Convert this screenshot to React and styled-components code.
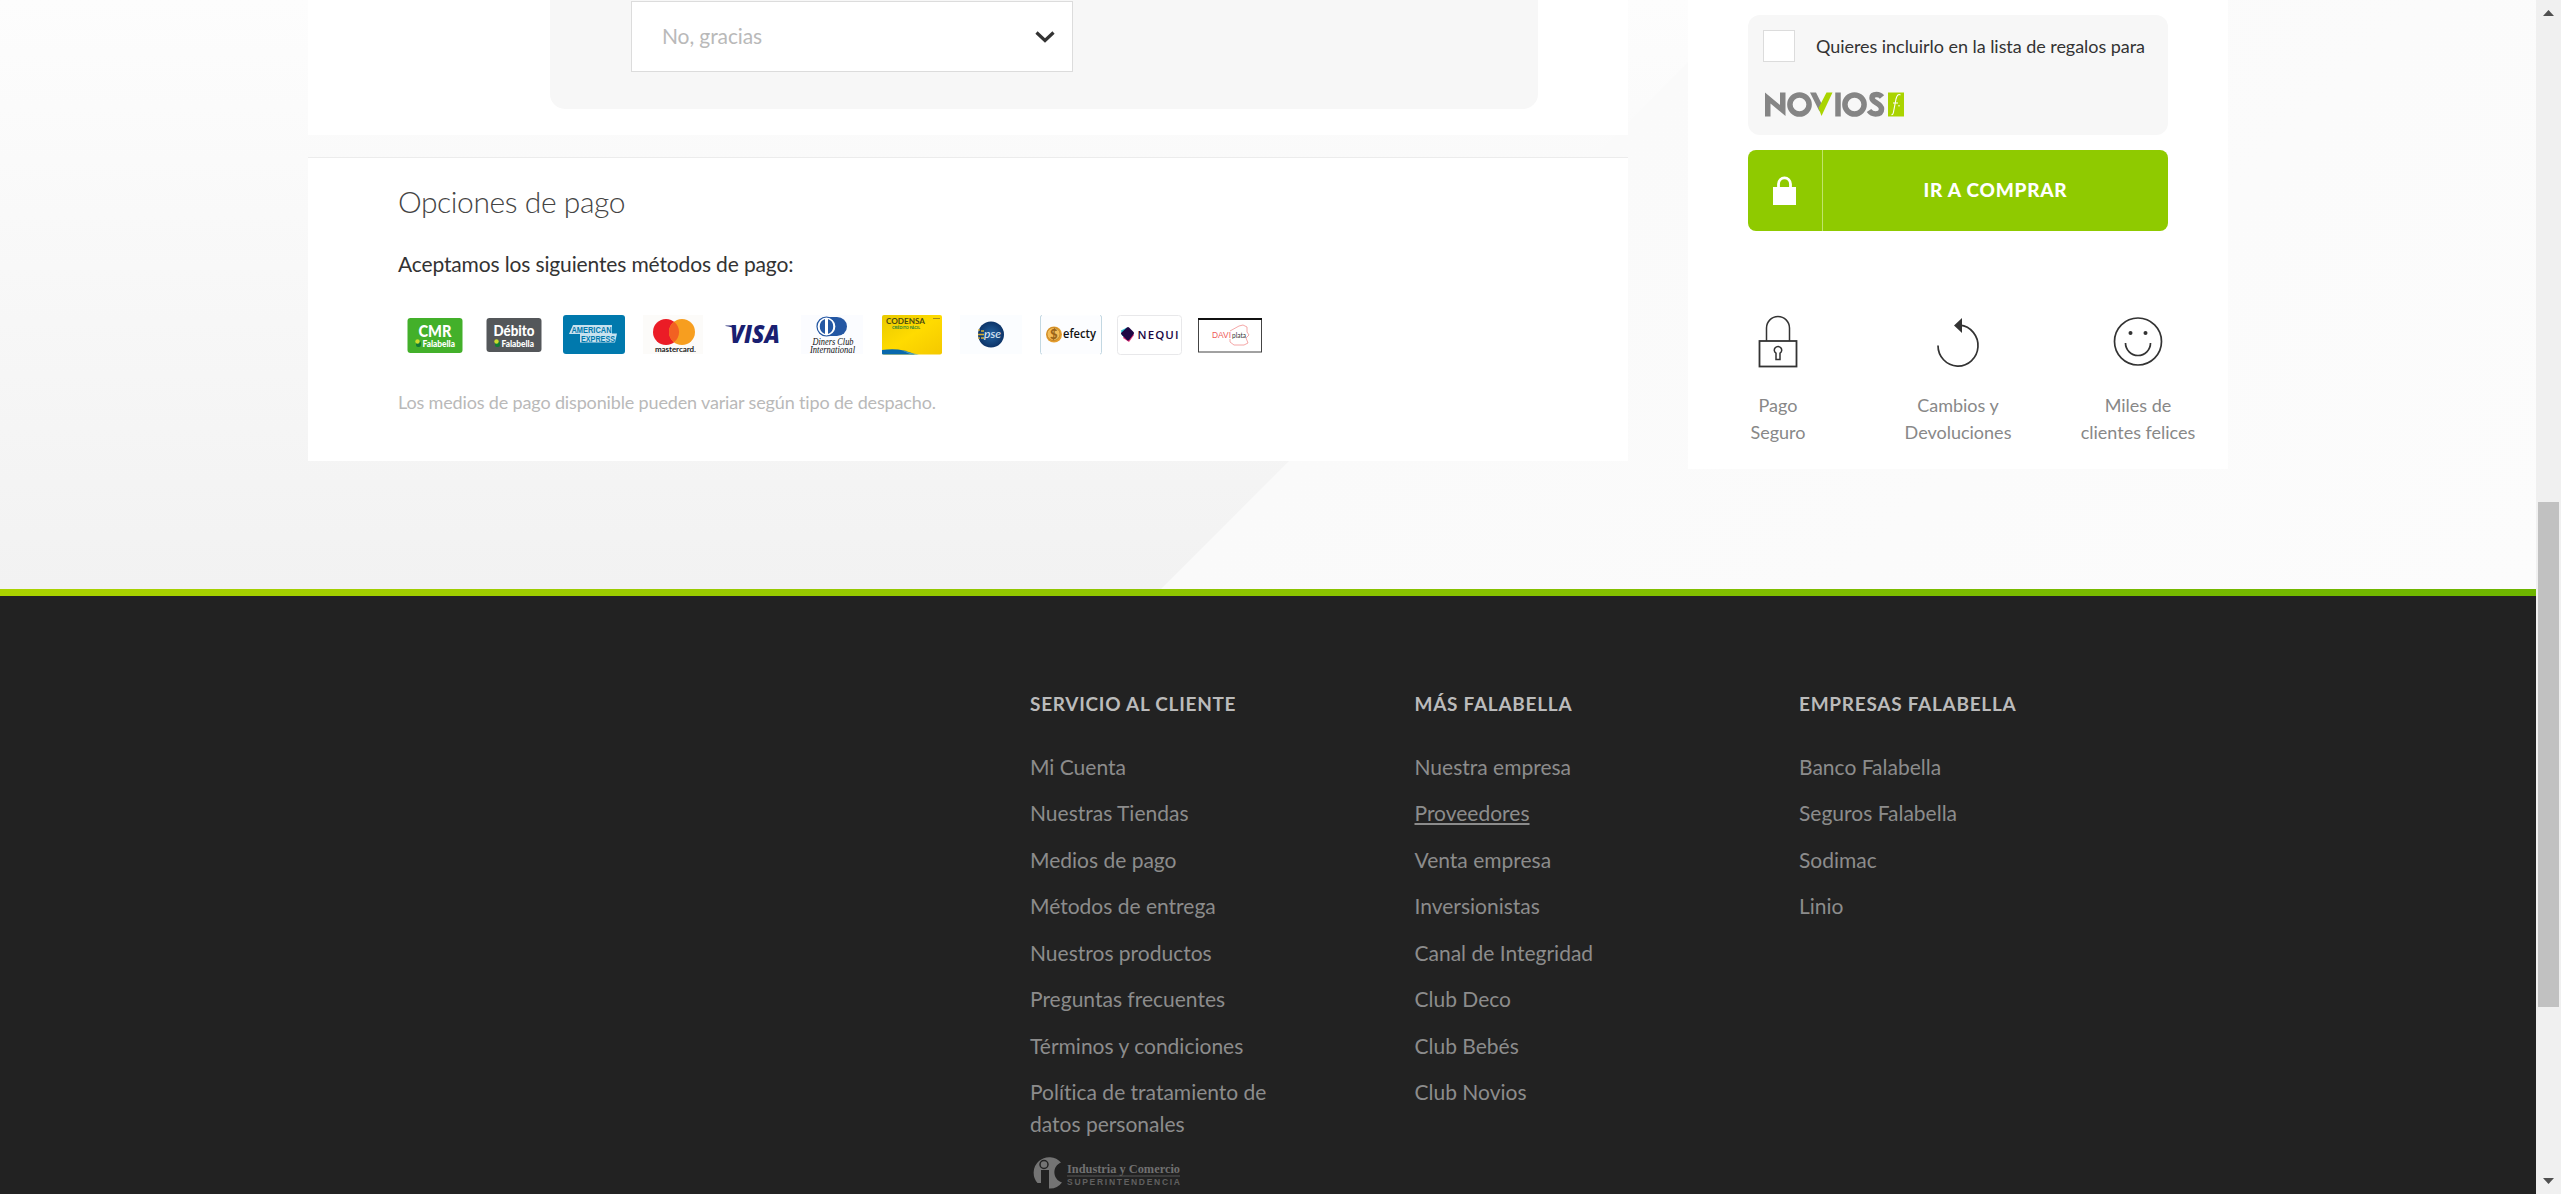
import React from "react";
import styled, { createGlobalStyle } from "styled-components";

const Global = createGlobalStyle`
  * { box-sizing: border-box; }
  body { margin: 0; overflow: hidden; font-family: Lato, "Liberation Sans", sans-serif; font-variant-ligatures: none; color: #333; }
  svg { display: block; }
`;

const Screen = styled.div`
  display: flex;
  width: 2561px;
  height: 1194px;
  overflow: hidden;
`;

const Page = styled.div`
  width: 2536px;
  height: 1194px;
  overflow: hidden;
`;

const Main = styled.main`
  display: flex;
  gap: 60px;
  height: 589px;
  padding-left: 308px;
  align-items: flex-start;
  background:
    linear-gradient(135deg, transparent 0 1237px, #fafafa 1238px, #fcfcfc 100%),
    linear-gradient(180deg, #fdfdfd, #f2f2f2);
`;

const Column = styled.div`
  display: flex;
  flex-direction: column;
  gap: 22px;
  width: 1320px;
`;

const ExtrasCard = styled.section`
  height: 135px;
  padding: 0 90px 0 242px;
  background: #fff;
`;

const ExtrasBox = styled.div`
  height: 109px;
  padding: 1px 0 0 81px;
  border-radius: 0 0 15px 15px;
  background: #f7f7f7;
`;

const Select = styled.div`
  display: flex;
  align-items: center;
  justify-content: space-between;
  width: 442px;
  height: 71px;
  padding: 0 16px 0 30px;
  border: 1px solid #dcdcdc;
  background: #fff;
  font-size: 21px;
  letter-spacing: -0.1px;
  color: #b9b9b9;
`;

const SelectValue = styled.span`
  padding-bottom: 2px;
`;

const PaymentCard = styled.section`
  height: 304px;
  padding: 21px 90px 0;
  border-top: 1px solid #ececec;
  background: #fff;
`;

const Title = styled.h2`
  margin: 0;
  font-size: 30px;
  font-weight: 300;
  line-height: 44px;
  letter-spacing: -0.42px;
  color: #444;
`;

const Lead = styled.p`
  margin: 25px 0 0;
  font-size: 21px;
  line-height: 32px;
  letter-spacing: -0.14px;
`;

const Methods = styled.div`
  display: flex;
  margin: 31px 0 0 -3px;
`;

const Method = styled.div`
  display: flex;
  justify-content: center;
  width: 79.5px;
`;

const Note = styled.p`
  margin: 29px 0 0;
  font-size: 18px;
  line-height: 32px;
  letter-spacing: -0.15px;
  color: #b9b9b9;
`;

const Sidebar = styled.aside`
  width: 540px;
  height: 469px;
  padding-top: 15px;
  background: #fff;
`;

const GiftBox = styled.div`
  display: flex;
  flex-direction: column;
  gap: 29px;
  width: 420px;
  height: 120px;
  margin: 0 60px;
  padding: 15px 0 0 15px;
  border-radius: 12px;
  background: #f7f7f7;
`;

const GiftRow = styled.label`
  display: flex;
  align-items: center;
  gap: 21px;
  height: 32px;
  font-size: 18px;
  letter-spacing: -0.05px;
`;

const Checkbox = styled.span`
  width: 32px;
  height: 32px;
  border: 1px solid #dcdcdc;
  background: #fff;
`;

const BuyButton = styled.button`
  display: flex;
  width: 420px;
  height: 81px;
  margin: 15px 60px 0;
  padding: 0;
  border: 0;
  border-radius: 8px;
  overflow: hidden;
  background: #8fca00;
  color: #fff;
  font: 900 19px Lato, sans-serif;
  letter-spacing: 0.75px;
`;

const BuyIcon = styled.span`
  display: flex;
  width: 75px;
  height: 81px;
  padding: 26px 0 0 25px;
  border-right: 1px solid #c0e46a;
`;

const BuyLabel = styled.span`
  flex: 1;
  line-height: 79px;
  text-align: center;
`;

const Benefits = styled.div`
  display: grid;
  grid-template-columns: repeat(3, 180px);
  margin-top: 83px;
`;

const Benefit = styled.div`
  display: flex;
  flex-direction: column;
  align-items: center;
  gap: 24px;
  font-size: 18px;
  line-height: 27px;
  text-align: center;
  white-space: pre-line;
  color: #888;
`;

const Footer = styled.footer`
  height: 605px;
  background: #222;
`;

const Accent = styled.div`
  height: 7px;
  background: linear-gradient(90deg, #aad200, #6db500);
`;

const FooterGrid = styled.div`
  display: grid;
  grid-template-columns: repeat(3, 384.5px);
  padding: 92px 0 0 1030px;
`;

const FooterColumn = styled.nav`
  display: flex;
  flex-direction: column;
  align-items: flex-start;
`;

const FooterTitle = styled.h3`
  margin: 0 0 31.6px;
  font-size: 19px;
  font-weight: 700;
  line-height: 31px;
  letter-spacing: 0.72px;
  color: #bbb;
`;

const FooterLink = styled.a`
  width: max-content;
  max-width: 250px;
  margin-bottom: 14.5px;
  font-size: 21px;
  line-height: 32px;
  color: #8c8c8c;
  text-decoration: ${(p) => (p.$active ? "underline" : "none")};
`;

const Seal = styled.div`
  margin: 1px 0 0 2px;
`;

const Scrollbar = styled.div`
  display: flex;
  flex-direction: column;
  align-items: center;
  justify-content: space-between;
  width: 25px;
  height: 1194px;
  padding: 10px 0;
  background: #f0f0f0;
`;

const Track = styled.div`
  width: 21px;
  height: 1162px;
  padding-top: 486px;
`;

const Thumb = styled.div`
  height: 505px;
  background: #c1c1c1;
`;

const Art = ({ children }) => (
  <svg width="70" height="46" viewBox="0 0 70 46">{children}</svg>
);

const Falabella = () => (
  <>
    <rect x="16" y="30" width="5" height="6" rx="2" fill="#127a35" />
    <circle cx="17.5" cy="30.5" r="2.2" fill="#c9dc2c" />
    <text x="22.5" y="35.500" fontSize="8.500" fontWeight="900" fill="#fff" textLength="32.500" lengthAdjust="spacingAndGlyphs">Falabella</text>
  </>
);

const methods = [
  <Art key="cmr">
    <rect x="7.5" y="7" width="55" height="35" rx="3" fill="#43b02a" />
    <text x="18.5" y="26" fontSize="16" fontWeight="900" fill="#fff" textLength="33" lengthAdjust="spacingAndGlyphs">CMR</text>
    <Falabella />
  </Art>,
  <Art key="debito">
    <rect x="7.5" y="7" width="55" height="34" rx="3" fill="#54575a" />
    <text x="14.5" y="25" fontSize="14.5" fontWeight="900" fill="#fff" textLength="41" lengthAdjust="spacingAndGlyphs">Débito</text>
    <Falabella />
  </Art>,
  <Art key="amex">
    <rect x="4" y="4" width="62" height="39" rx="3" fill="#0079ad" />
    <path d="M14 14H53V22.5H58L56 31.5H21V23H10Z" fill="#c7e2ef" />
    <text x="12.5" y="21.5" fontSize="8.5" fontFamily="Liberation Sans" fontWeight="700" fill="#0079ad" textLength="40" lengthAdjust="spacingAndGlyphs">AMERICAN</text>
    <text x="22" y="30.5" fontSize="8.5" fontFamily="Liberation Sans" fontWeight="700" fill="#0079ad" textLength="34" lengthAdjust="spacingAndGlyphs">EXPRESS</text>
  </Art>,
  <Art key="mastercard">
    <rect x="5" y="4" width="60" height="39" fill="#fcfbf9" />
    <circle cx="28" cy="21" r="13" fill="#eb1c26" />
    <circle cx="44" cy="21" r="13" fill="#f79e1f" />
    <path d="M36 10.7a13 13 0 0 1 0 20.6a13 13 0 0 1 0-20.6" fill="#f26122" />
    <text x="17" y="41" fontSize="8" fontWeight="700" fill="#222" textLength="39">mastercard</text>
    <circle cx="57" cy="40.5" r=".6" fill="#222" />
  </Art>,
  <Art key="visa">
    <text x="12" y="32" fontSize="25" fontFamily="Open Sans" fontStyle="italic" fontWeight="800" fill="#1a1f71" textLength="50" lengthAdjust="spacingAndGlyphs">VISA</text>
    <path d="M7.5 14.5H15l3 4q-4-3-10.500-3.500Z" fill="#1a1f71" />
  </Art>,
  <Art key="diners">
    <rect x="4" y="4" width="62" height="39" fill="#fbfcff" />
    <path d="M29 6h11a10 9.500 0 0 1 0 19H29Z" fill="#2457a3" />
    <circle cx="29.500" cy="15.500" r="9.500" fill="#fff" stroke="#2457a3" strokeWidth="1.200" />
    <path d="M28 8a8 8 0 0 0 0 15ZM31 8a8 8 0 0 1 0 15Z" fill="#2457a3" />
    <text x="15.500" y="34" fontSize="9.500" fontFamily="Liberation Serif" fontStyle="italic" fill="#111" textLength="41" lengthAdjust="spacingAndGlyphs">Diners Club</text>
    <text x="13" y="41.500" fontSize="9.500" fontFamily="Liberation Serif" fontStyle="italic" fill="#111" textLength="45" lengthAdjust="spacingAndGlyphs">International</text>
  </Art>,
  <Art key="codensa">
    <defs>
      <linearGradient id="gold" x1="0" y1="0" x2="1" y2="1">
        <stop offset="0" stopColor="#e9ca00" />
        <stop offset=".5" stopColor="#ffdb00" />
        <stop offset="1" stopColor="#f4c800" />
      </linearGradient>
    </defs>
    <rect x="5" y="4" width="60" height="39.500" rx="2" fill="url(#gold)" />
    <path d="M5 39q18-3 33 4.500H6q-1 0-1-1Z" fill="#0868ad" />
    <path d="M24 39q8 3 18 4.500h-8Z" fill="#50a5c0" />
    <text x="9" y="12.500" fontSize="8" fontWeight="700" fill="#4c4a10" textLength="39" lengthAdjust="spacingAndGlyphs">CODENSA</text>
    <text x="15" y="17.500" fontSize="4" fontWeight="700" fill="#26813c" textLength="28">CRÉDITO FÁCIL</text>
    <path d="M56 7.500h7" stroke="#a58c16" />
  </Art>,
  <Art key="pse">
    <defs>
      <radialGradient id="navy">
        <stop offset="0" stopColor="#2364a3" />
        <stop offset="1" stopColor="#0d3468" />
      </radialGradient>
    </defs>
    <rect x="4" y="4" width="62" height="39" fill="#fbfdff" />
    <circle cx="35" cy="23.500" r="13" fill="url(#navy)" />
    <path d="M22 23.500h6M25 20h3M25 27h3M23 18v2M23 26v2" stroke="#d8ae35" strokeWidth="1.300" />
    <text x="28" y="27" fontSize="12" fontStyle="italic" fill="#e5eef8" textLength="17">pse</text>
  </Art>,
  <Art key="efecty">
    <rect x="4.500" y="4.500" width="61" height="38.500" rx="2" fill="#fcfdff" />
    <path d="M6 4.500q-1.500 0-1.500 1.500v35.500q0 1.500 1.500 1.500M64 4.500q1.500 0 1.500 1.500v35.500q0 1.500-1.500 1.500" fill="none" stroke="#c3d8e2" />
    <circle cx="18" cy="23.500" r="8" fill="#e59d2d" />
    <circle cx="17.500" cy="23" r="6.500" fill="#f4bd58" stroke="#b8781f" strokeWidth=".7" />
    <text x="14" y="28" fontSize="13" fontWeight="900" fill="#9b6418">$</text>
    <text x="27" y="27" fontSize="12" fontFamily="Open Sans" fontWeight="600" fill="#111" textLength="33" lengthAdjust="spacingAndGlyphs">efecty</text>
  </Art>,
  <Art key="nequi">
    <rect x="2.500" y="4.500" width="64" height="39" rx="3" fill="#fff" stroke="#e8e8ea" />
    <path d="M6 19.500l6-3 4 5-5 6-4-3Z" fill="#29c5d1" />
    <path d="M13 17l6 7-5 7-6-4Z" fill="#e8337b" />
    <path d="M13 17.500l4.500 4.500-4.500 6-5.500-5.500Z" fill="#200744" stroke="#200744" strokeWidth="3" strokeLinejoin="round" />
    <text x="22.500" y="28" fontSize="11.500" fontFamily="Open Sans" fontWeight="600" fill="#200744" textLength="41">NEQUI</text>
  </Art>,
  <Art key="daviplata">
    <rect x="3.500" y="8" width="63" height="33" fill="#fff" stroke="#444" />
    <path d="M3 8h64" stroke="#111" strokeWidth="2" />
    <path d="M35 20l9-5 4-1 4 2v5l2 3-3 3 2 5-4 2H39l-4-3v-3" fill="none" stroke="#f19090" strokeWidth=".8" />
    <text x="17" y="27" fontSize="8.500" fontFamily="Liberation Sans" fill="#ee5a5a" textLength="19" lengthAdjust="spacingAndGlyphs">DAVI</text>
    <text x="37" y="26.500" fontSize="7" fill="#333" textLength="14" lengthAdjust="spacingAndGlyphs">plata</text>
  </Art>,
];

const NoviosLogo = () => (
  <svg width="144" height="26" viewBox="0 0 144 26">
    <g fill="none" stroke="#858585" strokeWidth="5.500">
      <circle cx="36.500" cy="13.500" r="9.600" />
      <circle cx="91.500" cy="13.500" r="9.600" />
      <path d="M75 1.500V25.500" />
      <path d="M119 6q-2-2.500-5.500-2.500-4.500 0-4.500 3.500c0 5 9.500 5 9.500 11 0 3.500-2.500 5-6 5q-4 0-6.500-3.500" />
    </g>
    <path d="M2 1.500L17 14V1.500h5.500V25L7.500 12.500V25.500H2ZM47 1.500h6l6 12-2.500 7Z" fill="#858585" />
    <path d="M69.500 1.500H63.500L55.500 17l3 8Z" fill="#aad400" />
    <path d="M125 1.500h16v24h-16Z" fill="#aad400" />
    <path d="M137.500 4q-3-2-4.500 4l-2.500 13q-.6 3-2 2.500M130 12h5M136 14v1.500" fill="none" stroke="#fff" strokeWidth="1.100" />
  </svg>
);

const icons = {
  lock: (
    <svg width="52" height="54" viewBox="0 0 52 54" fill="none" stroke="#333" strokeWidth="1.800">
      <rect x="7.500" y="27" width="37" height="25.500" />
      <path d="M14.500 27V14a11.500 11.500 0 0 1 23 0V27" strokeWidth="1.500" />
      <path d="M24 39.200a3.700 3.700 0 1 1 4 0V45.500h-4Z" strokeWidth="1.500" />
    </svg>
  ),
  back: (
    <svg width="52" height="54" viewBox="0 0 52 54">
      <path d="M6 31.500A20 20.500 0 1 0 28 11.200" fill="none" stroke="#333" strokeWidth="1.700" />
      <path d="M22 11.500L30 4V19Z" fill="#333" />
    </svg>
  ),
  smile: (
    <svg width="52" height="54" viewBox="0 0 52 54">
      <circle cx="26" cy="27.500" r="23.500" fill="none" stroke="#333" strokeWidth="1.700" />
      <circle cx="18.500" cy="19" r="2" fill="#333" />
      <circle cx="33.500" cy="19" r="2" fill="#333" />
      <path d="M13.500 29a12.500 12.500 0 0 0 25 0" fill="none" stroke="#333" strokeWidth="1.700" />
    </svg>
  ),
};

const benefits = [
  ["lock", "Pago\nSeguro"],
  ["back", "Cambios y\nDevoluciones"],
  ["smile", "Miles de\nclientes felices"],
];

const footer = [
  ["SERVICIO AL CLIENTE", ["Mi Cuenta", "Nuestras Tiendas", "Medios de pago", "Métodos de entrega", "Nuestros productos", "Preguntas frecuentes", "Términos y condiciones", "Política de tratamiento de datos personales"]],
  ["MÁS FALABELLA", ["Nuestra empresa", "Proveedores", "Venta empresa", "Inversionistas", "Canal de Integridad", "Club Deco", "Club Bebés", "Club Novios"]],
  ["EMPRESAS FALABELLA", ["Banco Falabella", "Seguros Falabella", "Sodimac", "Linio"]],
];

const SealLogo = () => (
  <svg width="150" height="34" viewBox="0 0 150 34">
    <path d="M5.500 27A15.500 15.500 0 0 1 29 6.500C20 10 20 23 30 26.500A15 15 0 0 1 17 32.500V14H9V27Z" fill="#747474" />
    <circle cx="12" cy="8.500" r="4" fill="#747474" stroke="#222" strokeWidth="1.500" />
    <text x="35" y="17" fontSize="12.500" fontFamily="Liberation Serif" fontWeight="700" fill="#707070" textLength="113" lengthAdjust="spacingAndGlyphs">Industria y Comercio</text>
    <path d="M35 20h113" stroke="#555" />
    <text x="35" y="29" fontSize="8.500" fontFamily="Liberation Sans" fontWeight="700" fill="#606060" textLength="113">SUPERINTENDENCIA</text>
  </svg>
);

export default function App() {
  return (
    <Screen>
      <Global />
      <Page>
        <Main>
          <Column>
            <ExtrasCard>
              <ExtrasBox>
                <Select>
                  <SelectValue>No, gracias</SelectValue>
                  <svg width="22" height="14" viewBox="0 0 22 14">
                    <path d="M2.500 2.500L11 10.500L19.500 2.500" fill="none" stroke="#333" strokeWidth="3.200" />
                  </svg>
                </Select>
              </ExtrasBox>
            </ExtrasCard>
            <PaymentCard>
              <Title>Opciones de pago</Title>
              <Lead>Aceptamos los siguientes métodos de pago:</Lead>
              <Methods>{methods.map((m) => <Method key={m.key}>{m}</Method>)}</Methods>
              <Note>Los medios de pago disponible pueden variar según tipo de despacho.</Note>
            </PaymentCard>
          </Column>
          <Sidebar>
            <GiftBox>
              <GiftRow><Checkbox />Quieres incluirlo en la lista de regalos para</GiftRow>
              <NoviosLogo />
            </GiftBox>
            <BuyButton>
              <BuyIcon>
                <svg width="24" height="30" viewBox="0 0 24 30">
                  <path d="M0 11H23V29H0Z" fill="#fff" />
                  <path d="M5.500 12V8a6 6.200 0 0 1 12 0V12" fill="none" stroke="#fff" strokeWidth="2.800" />
                </svg>
              </BuyIcon>
              <BuyLabel>IR A COMPRAR</BuyLabel>
            </BuyButton>
            <Benefits>
              {benefits.map(([icon, label]) => <Benefit key={icon}>{icons[icon]}<span>{label}</span></Benefit>)}
            </Benefits>
          </Sidebar>
        </Main>
        <Footer>
          <Accent />
          <FooterGrid>
            {footer.map(([title, links], i) => (
              <FooterColumn key={title}>
                <FooterTitle>{title}</FooterTitle>
                {links.map((l) => <FooterLink key={l} $active={l === "Proveedores"}>{l}</FooterLink>)}
                {i === 0 && <Seal><SealLogo /></Seal>}
              </FooterColumn>
            ))}
          </FooterGrid>
        </Footer>
      </Page>
      <Scrollbar>
        <svg width="11" height="6" viewBox="0 0 11 6"><path d="M0 6L5.500 0L11 6Z" fill="#505050" /></svg>
        <Track><Thumb /></Track>
        <svg width="11" height="6" viewBox="0 0 11 6"><path d="M0 0L5.500 6L11 0Z" fill="#505050" /></svg>
      </Scrollbar>
    </Screen>
  );
}
